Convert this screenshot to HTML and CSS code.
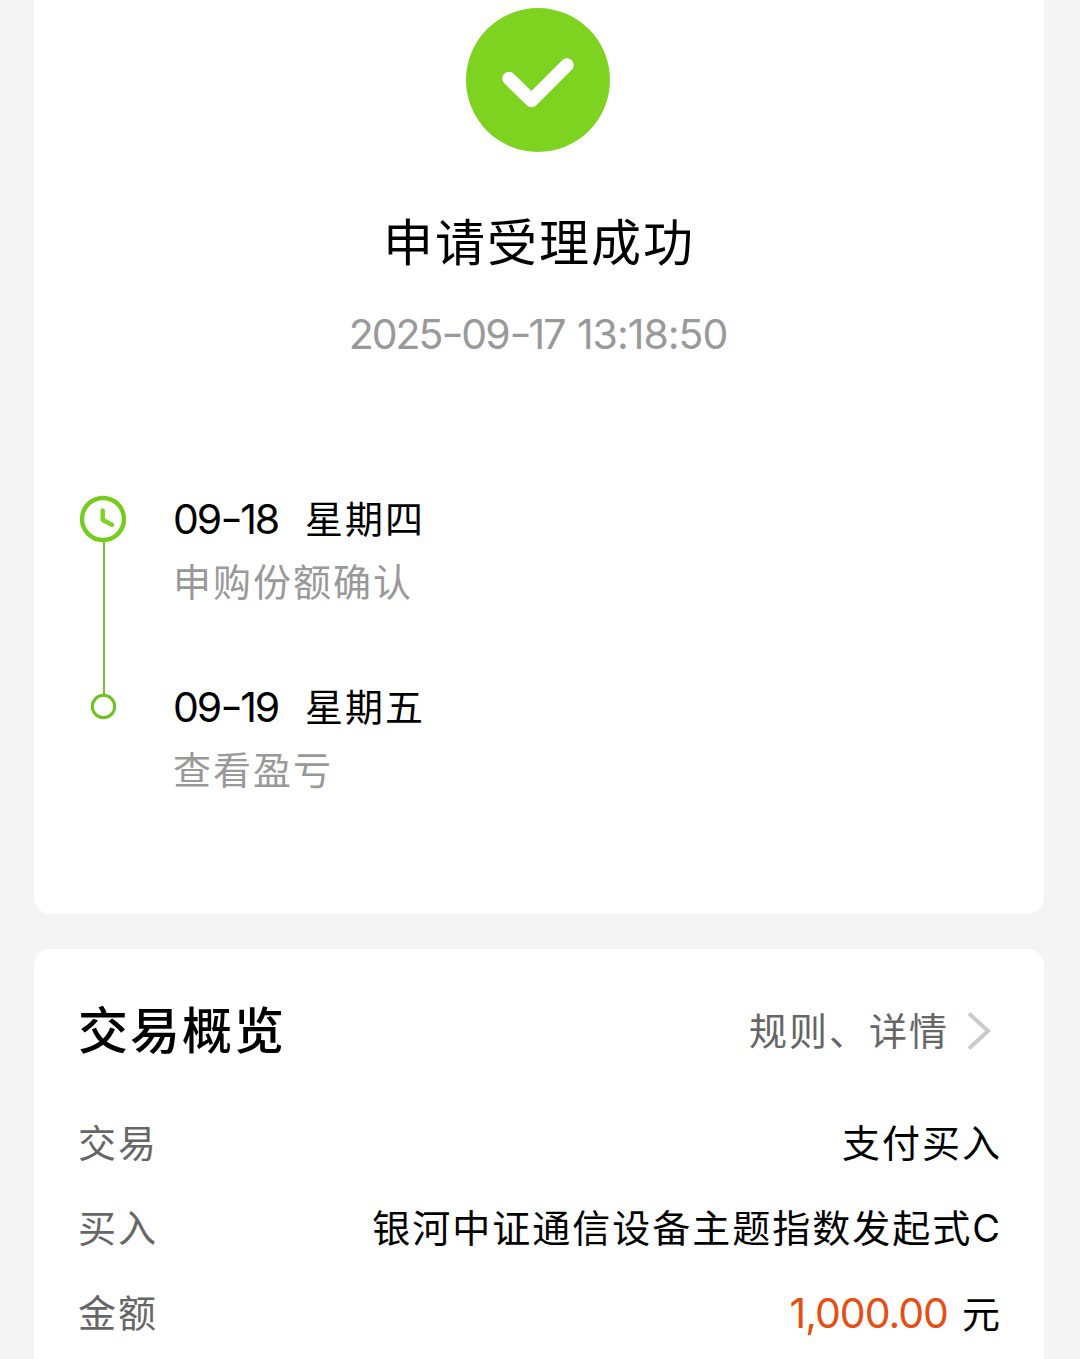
FILE: index.html
```html
<!DOCTYPE html>
<html lang="zh-CN">
   <head>
      <meta charset="utf-8">
      <meta name="viewport" content="width=device-width, initial-scale=1">
      <title>申请受理成功</title>
      <link rel="stylesheet" href="styles.css">
   </head>
   <body>
      <div class="card result">
        <svg class="success" viewBox="0 0 144 144">
          <circle cx="72" cy="72" r="72" fill="#7ed321"/>
          <path d="M43 70.5L65.5 92.5L101 57" fill="none" stroke="#fff" stroke-width="13.5" stroke-linecap="round" stroke-linejoin="round"/>
        </svg>
        <h1 class="title">申请受理成功</h1>
        <div class="time num"><span class="date">2025<span class="dash">-</span>09<span class="dash">-</span>17</span> <span class="clock">13:18:50</span></div>

        <div class="timeline">
          <svg class="rail" viewBox="0 0 50 252">
            <path d="M26 54V208" stroke="#7dbb42" stroke-width="2"/>
            <circle cx="25" cy="32" r="21" fill="#fff" stroke="#74cd1c" stroke-width="4.4"/>
            <path d="M24.7 23.5V33L34 37.8" fill="none" stroke="#7ed321" stroke-width="4.4" stroke-linecap="round" stroke-linejoin="round"/>
            <circle cx="25.5" cy="219.5" r="11.2" fill="#fff" stroke="#70c122" stroke-width="3"/>
          </svg>
          <div class="steps">
            <div class="step">
              <div class="day"><span class="num date">09<span class="dash">-</span>18</span><span class="week">星期四</span></div>
              <div class="desc">申购份额确认</div>
            </div>
            <div class="step">
              <div class="day"><span class="num date">09<span class="dash">-</span>19</span><span class="week">星期五</span></div>
              <div class="desc">查看盈亏</div>
            </div>
          </div>
        </div>
      </div>

      <div class="card overview">
        <div class="head">
          <h2 class="title">交易概览</h2>
          <div class="more">
            规则、详情
            <svg class="arrow" viewBox="0 0 24 40">
              <path d="M2 2.5L21 20L2 37.5" fill="none" stroke="#cbcbcb" stroke-width="4"/>
            </svg>
          </div>
        </div>
        <div class="row">
          <span class="label">交易</span>
          <span class="value">支付买入</span>
        </div>
        <div class="row">
          <span class="label">买入</span>
          <span class="value">银河中证通信设备主题指数发起式C</span>
        </div>
        <div class="row">
          <span class="label">金额</span>
          <span class="value"><span class="num money">1,000.00</span>元</span>
        </div>
      </div>
   </body>
</html>
```

FILE: styles.css
```css
* {
  box-sizing: border-box;
}
body {
  margin: 0;
  height: 1359px;
  overflow: hidden;
  background: #f4f4f4;
  color: #000;
  font-family: Inter, "Noto Sans CJK SC", sans-serif;
  font-size: 38px;
  letter-spacing: 2px;
}
.card {
  width: 1010px;
  margin-left: 34px;
  background: #fff;
}
.result {
  height: 914px;
  padding: 8px 44px 0;
  border-radius: 0 0 17px 17px;
}
.success {
  display: block;
  width: 144px;
  height: 144px;
  margin: 0 auto;
  transform: translateX(-1px);
}
.title {
  margin: 0;
  font-size: 50px;
  font-weight: 400;
  line-height: 60px;
}
.result .title {
  margin-top: 61px;
  text-align: center;
}
.num {
  font-family: Inter, sans-serif;
  font-size: 41px;
  font-weight: 400;
  letter-spacing: -1px;
}
.date {
  letter-spacing: -2px;
}
.dash {
  display: inline-block;
  margin: 0 1px 0 2px;
  line-height: 1;
  transform: translateY(-1px) scaleX(1.2);
}
.time {
  margin-top: 36px;
  padding-right: 2px;
  line-height: 50px;
  text-align: center;
  color: #999;
}
.clock {
  margin-left: 2px;
}
.timeline {
  display: flex;
  margin-top: 128px;
}
.rail {
  width: 50px;
  height: 252px;
  margin-right: 45px;
}
.steps {
  display: flex;
  flex-direction: column;
  gap: 62px;
}
.day {
  display: flex;
  line-height: 64px;
}
.day .num {
  width: 132px;
}
.desc {
  color: #999;
  line-height: 62px;
}
.overview {
  height: 430px;
  margin-top: 35px;
  padding: 52px 44px 0;
  border-radius: 17px 17px 0 0;
}
.head {
  display: flex;
  justify-content: space-between;
  align-items: center;
  height: 60px;
  margin-bottom: 40px;
}
.head .title {
  font-weight: 500;
}
.more {
  display: flex;
  align-items: center;
  padding-right: 9px;
  line-height: 60px;
  color: #666;
}
.arrow {
  width: 24px;
  height: 40px;
  margin-left: 18px;
}
.row {
  display: flex;
  justify-content: space-between;
  height: 85px;
  line-height: 85px;
}
.label {
  color: #666;
}
.value {
  margin-right: -2px;
  white-space: nowrap;
}
.money {
  margin-right: 14px;
  color: #e64f14;
}
```
